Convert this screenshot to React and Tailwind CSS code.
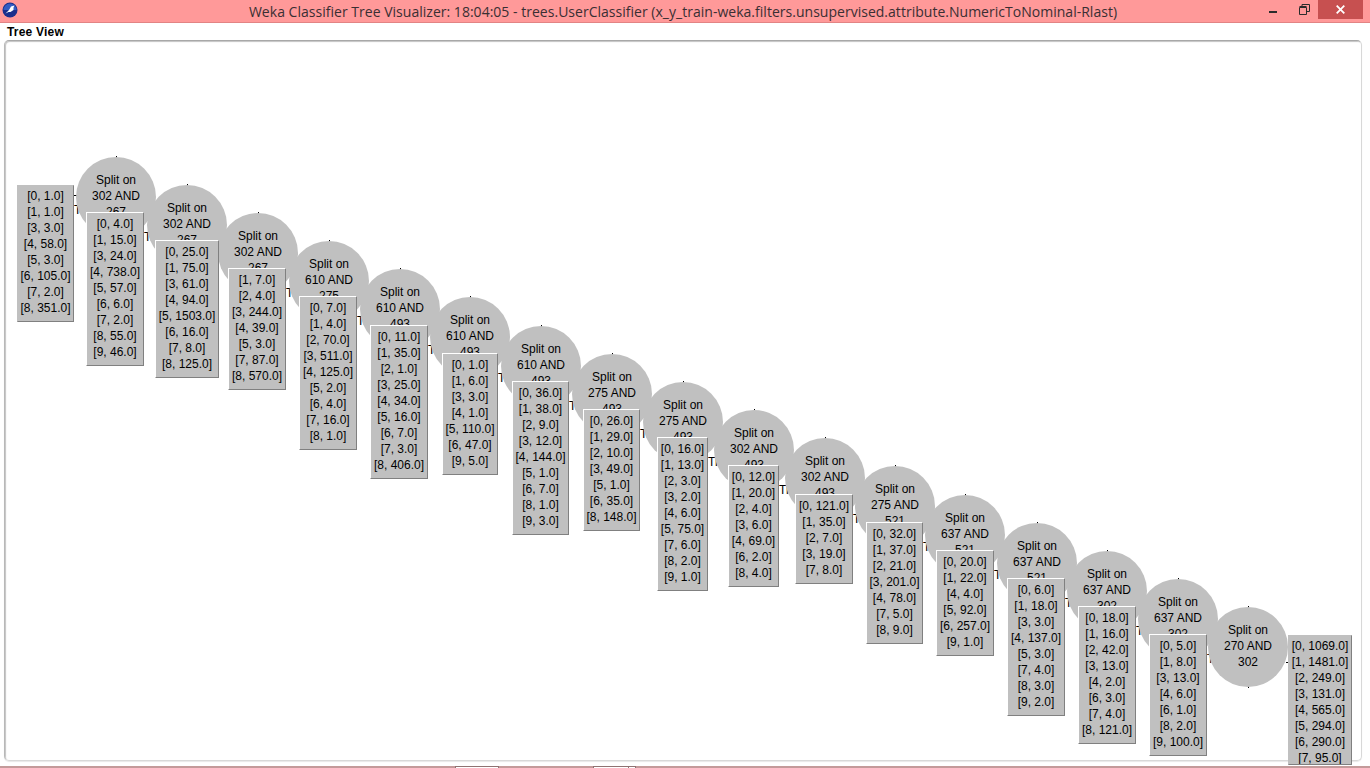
const PANEL_X = 5;
const PANEL_Y = 41;

const splits = [
  [116, 197, "302", "267"], [187, 225, "302", "267"], [258, 253, "302", "267"], [329, 281, "610", "275"],
  [400, 309, "610", "493"], [470, 337, "610", "493"], [541, 366, "610", "493"], [612, 394, "275", "493"],
  [683, 422, "275", "493"], [754, 450, "302", "493"], [825, 478, "302", "493"], [895, 506, "275", "521"],
  [965, 535, "637", "521"], [1037, 563, "637", "521"], [1107, 591, "637", "302"], [1178, 619, "637", "302"],
  [1248, 647, "270", "302"],
];

const leaves = [
  [17, 74, 185, ["[0, 1.0]", "[1, 1.0]", "[3, 3.0]", "[4, 58.0]", "[5, 3.0]", "[6, 105.0]", "[7, 2.0]", "[8, 351.0]"]],
  [86, 144, 212, ["[0, 4.0]", "[1, 15.0]", "[3, 24.0]", "[4, 738.0]", "[5, 57.0]", "[6, 6.0]", "[7, 2.0]", "[8, 55.0]", "[9, 46.0]"]],
  [155, 219, 240, ["[0, 25.0]", "[1, 75.0]", "[3, 61.0]", "[4, 94.0]", "[5, 1503.0]", "[6, 16.0]", "[7, 8.0]", "[8, 125.0]"]],
  [228, 286, 268, ["[1, 7.0]", "[2, 4.0]", "[3, 244.0]", "[4, 39.0]", "[5, 3.0]", "[7, 87.0]", "[8, 570.0]"]],
  [299, 357, 296, ["[0, 7.0]", "[1, 4.0]", "[2, 70.0]", "[3, 511.0]", "[4, 125.0]", "[5, 2.0]", "[6, 4.0]", "[7, 16.0]", "[8, 1.0]"]],
  [370, 428, 325, ["[0, 11.0]", "[1, 35.0]", "[2, 1.0]", "[3, 25.0]", "[4, 34.0]", "[5, 16.0]", "[6, 7.0]", "[7, 3.0]", "[8, 406.0]"]],
  [442, 498, 353, ["[0, 1.0]", "[1, 6.0]", "[3, 3.0]", "[4, 1.0]", "[5, 110.0]", "[6, 47.0]", "[9, 5.0]"]],
  [512, 569, 381, ["[0, 36.0]", "[1, 38.0]", "[2, 9.0]", "[3, 12.0]", "[4, 144.0]", "[5, 1.0]", "[6, 7.0]", "[8, 1.0]", "[9, 3.0]"]],
  [583, 640, 409, ["[0, 26.0]", "[1, 29.0]", "[2, 10.0]", "[3, 49.0]", "[5, 1.0]", "[6, 35.0]", "[8, 148.0]"]],
  [657, 708, 437, ["[0, 16.0]", "[1, 13.0]", "[2, 3.0]", "[3, 2.0]", "[4, 6.0]", "[5, 75.0]", "[7, 6.0]", "[8, 2.0]", "[9, 1.0]"]],
  [728, 779, 465, ["[0, 12.0]", "[1, 20.0]", "[2, 4.0]", "[3, 6.0]", "[4, 69.0]", "[6, 2.0]", "[8, 4.0]"]],
  [795, 853, 494, ["[0, 121.0]", "[1, 35.0]", "[2, 7.0]", "[3, 19.0]", "[7, 8.0]"]],
  [866, 923, 522, ["[0, 32.0]", "[1, 37.0]", "[2, 21.0]", "[3, 201.0]", "[4, 78.0]", "[7, 5.0]", "[8, 9.0]"]],
  [936, 994, 550, ["[0, 20.0]", "[1, 22.0]", "[4, 4.0]", "[5, 92.0]", "[6, 257.0]", "[9, 1.0]"]],
  [1007, 1065, 578, ["[0, 6.0]", "[1, 18.0]", "[3, 3.0]", "[4, 137.0]", "[5, 3.0]", "[7, 4.0]", "[8, 3.0]", "[9, 2.0]"]],
  [1078, 1136, 606, ["[0, 18.0]", "[1, 16.0]", "[2, 42.0]", "[3, 13.0]", "[4, 2.0]", "[6, 3.0]", "[7, 4.0]", "[8, 121.0]"]],
  [1149, 1207, 634, ["[0, 5.0]", "[1, 8.0]", "[3, 13.0]", "[4, 6.0]", "[6, 1.0]", "[8, 2.0]", "[9, 100.0]"]],
];

const lastLeaf = ["[0, 1069.0]", "[1, 1481.0]", "[2, 249.0]", "[3, 131.0]", "[4, 565.0]", "[5, 294.0]", "[6, 290.0]", "[7, 95.0]"];

function WekaIcon() {
  return (
    <svg width="16" height="16" viewBox="0 0 16 16" className="ml-[2px] shrink-0">
      <circle cx="8" cy="8" r="7.5" fill="#1a2f8c" />
      <path d="M1.5 8a6.5 6.5 0 0 1 13 0z" fill="#3f6fd8" opacity="0.7" />
      <path d="M3.5 11.5 L7 8 L9 4.5 L12.5 3.5 L11.5 5.5 L11.5 8 L8.5 10 L6.5 10 Z" fill="#ffffff" />
    </svg>
  );
}

function SplitNode({ cx, cy, a, b }) {
  return (
    <div
      className="absolute w-[80px] h-[80px] rounded-full bg-[#c0c0c0] pt-[15px] text-center text-[12px] leading-[16px] text-black"
      style={{ left: cx - 40 - PANEL_X, top: cy - 40 - PANEL_Y }}
    >
      <div>Split on</div>
      <div>{a} AND</div>
      <div>{b}</div>
    </div>
  );
}

function LeafNode({ x, right, top, lines, flat, height }) {
  return (
    <div
      className={
        "absolute overflow-hidden bg-[#c0c0c0] border text-center text-[12px] leading-[16px] text-black whitespace-nowrap border-r-[#808080] border-b-[#808080] " +
        (flat ? "pt-[2px] border-t-[#c0c0c0] border-l-[#c0c0c0]" : "pt-[3px] border-t-white border-l-white")
      }
      style={{ left: x - PANEL_X, top: top - PANEL_Y, width: right - x, height: height ?? lines.length * 16 + (flat ? 9 : 10) }}
    >
      {lines.map((l) => (
        <div key={l}>{l}</div>
      ))}
    </div>
  );
}

export default function App() {
  return (
    <div className="relative flex flex-col h-[768px] w-[1370px] overflow-hidden bg-white font-['Liberation_Sans',Arial,sans-serif]">
      {/* title bar */}
      <div className="flex items-start h-[23px] shrink-0 bg-[#ff9999] border-b border-[#e28484]">
        <div className="flex items-center h-[20px] w-[20px]">
          <WekaIcon />
        </div>
        <div className="flex-1 pt-[2px] pl-[96px] text-center text-[14px] leading-[19px] tracking-[0.02px] text-[#3a2f33] font-['Open_Sans',sans-serif] whitespace-nowrap">
          Weka Classifier Tree Visualizer: 18:04:05 - trees.UserClassifier (x_y_train-weka.filters.unsupervised.attribute.NumericToNominal-Rlast)
        </div>
        <div className="flex items-start shrink-0 mr-[7px]">
          <div className="w-[45px] h-[20px] flex justify-center pt-[11px]">
            <div className="w-[8px] h-[2px] bg-[#2b2b2b]" />
          </div>
          <div className="w-[4px]" />
          <div className="w-[10px] h-[20px] pt-[4px]">
            <svg width="11" height="11" viewBox="0 0 11 11" fill="none" stroke="#2b2b2b">
              <path d="M.5 3.5h7v7h-7z" />
              <path d="M.5 2.5h7" />
              <path d="M3 2.5V.5h7.5v7H8" />
            </svg>
          </div>
          <div className="w-[9px]" />
          <div className="w-[45px] h-[19px] bg-[#c75050] flex items-center justify-center">
            <svg width="9" height="9" viewBox="0 0 9 9" stroke="#ffffff" strokeWidth="1.8">
              <path d="M.7.7l7.6 7.6M8.3.7L.7 8.3" />
            </svg>
          </div>
        </div>
      </div>

      {/* menu */}
      <div className="h-[17px] shrink-0 pl-[7px] pt-[1px] text-[12px] leading-[17px] font-bold text-black tracking-[0.2px]">Tree View</div>

      {/* tree panel */}
      <div className="relative ml-[4px] mr-[8px] h-[721px] shrink-0 rounded-[5px] border border-t-[#a8a8a8] border-l-[#b8b8b8] border-r-[#d8d8d8] border-b-[#d8d8d8] shadow-[inset_1px_1px_1px_#c4c4c4,0_1px_1px_#e8e8e8]">
        {leaves.map(([x, right, top]) => (
          <span
            key={x}
            className="absolute text-[12px] leading-[16px] text-black"
            style={{ left: right - PANEL_X, top: top + 17 - PANEL_Y }}
          >
            True
          </span>
        ))}
        {splits.map(([cx, cy]) => (
          <div key={cx} className="absolute w-px h-[3px] bg-black" style={{ left: cx - PANEL_X, top: cy - 41 - PANEL_Y }} />
        ))}
        <div className="absolute w-px h-[2px] bg-black" style={{ left: 1248 - PANEL_X, top: 686 - PANEL_Y }} />
        <div className="absolute w-[3px] h-px bg-black" style={{ left: 1286 - PANEL_X, top: 662 - PANEL_Y }} />
        <div className="absolute w-[3px] h-px bg-black" style={{ left: 74 - PANEL_X, top: 195 - PANEL_Y }} />

        {splits.map(([cx, cy, a, b]) => (
          <SplitNode key={cx} cx={cx} cy={cy} a={a} b={b} />
        ))}
        {leaves.map(([x, right, top, lines], i) => (
          <LeafNode key={x} x={x} right={right} top={top} lines={lines} flat={i === 0} />
        ))}
        <LeafNode x={1288} right={1352} top={635} lines={lastLeaf} flat height={130} />
      </div>

      {/* what shows under the window */}
      <div className="mt-auto flex h-[2px] shrink-0 bg-[#c49a9a]">
        <div className="ml-[455px] w-[44px] border-t border-x border-[#8f7272] bg-white" />
        <div className="ml-[94px] w-[36px] border-t border-x border-[#8f7272] bg-white" />
        <div className="w-[7px] border-t border-r border-[#8f7272] bg-white" />
      </div>
    </div>
  );
}
